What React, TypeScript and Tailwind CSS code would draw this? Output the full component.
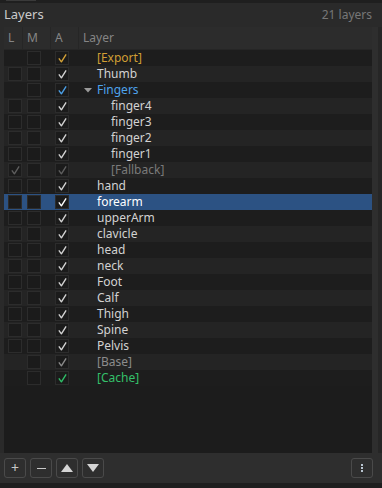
import React from 'react';

type Row = {
  name: string;
  depth: number;
  lBox: boolean;
  lCheck?: string;
  aCheck: string;
  text: string;
  arrow?: boolean;
  selected?: boolean;
};

const W = '#d2d2d2';

const rows: Row[] = [
  { name: '[Export]', depth: 0, lBox: false, aCheck: '#d4a237', text: '#d19f34' },
  { name: 'Thumb', depth: 0, lBox: true, aCheck: W, text: W },
  { name: 'Fingers', depth: 0, lBox: false, aCheck: '#4b9fe6', text: '#4ea3ec', arrow: true },
  { name: 'finger4', depth: 1, lBox: true, aCheck: W, text: W },
  { name: 'finger3', depth: 1, lBox: true, aCheck: W, text: W },
  { name: 'finger2', depth: 1, lBox: true, aCheck: W, text: W },
  { name: 'finger1', depth: 1, lBox: true, aCheck: W, text: W },
  { name: '[Fallback]', depth: 1, lBox: true, lCheck: '#5e5e5e', aCheck: '#5e5e5e', text: '#7a7a7a' },
  { name: 'hand', depth: 0, lBox: true, aCheck: W, text: W },
  { name: 'forearm', depth: 0, lBox: true, aCheck: '#ffffff', text: '#ffffff', selected: true },
  { name: 'upperArm', depth: 0, lBox: true, aCheck: W, text: W },
  { name: 'clavicle', depth: 0, lBox: true, aCheck: W, text: W },
  { name: 'head', depth: 0, lBox: true, aCheck: W, text: W },
  { name: 'neck', depth: 0, lBox: true, aCheck: W, text: W },
  { name: 'Foot', depth: 0, lBox: true, aCheck: W, text: W },
  { name: 'Calf', depth: 0, lBox: true, aCheck: W, text: W },
  { name: 'Thigh', depth: 0, lBox: true, aCheck: W, text: W },
  { name: 'Spine', depth: 0, lBox: true, aCheck: W, text: W },
  { name: 'Pelvis', depth: 0, lBox: true, aCheck: W, text: W },
  { name: '[Base]', depth: 0, lBox: false, aCheck: '#8a8a8a', text: '#8c8c8c' },
  { name: '[Cache]', depth: 0, lBox: false, aCheck: '#2fbf68', text: '#34c06a' },
];

function Check({ color }: { color: string }) {
  return (
    <svg width="11" height="11" viewBox="0 0 11 11">
      <path d="M2.2 5.8 L4.4 8.8 L8.8 1.8" fill="none" stroke={color} strokeWidth="1.4" strokeLinecap="round" strokeLinejoin="round" />
    </svg>
  );
}

function Box({ check }: { check?: string }) {
  return (
    <div className="w-[14px] h-[14px] bg-[#1b1b1b] border border-[#2c2c2c] flex items-center justify-center">
      {check && <Check color={check} />}
    </div>
  );
}

function LayerRow({ row, index }: { row: Row; index: number }) {
  const bg = row.selected ? 'bg-[#2c5283]' : index % 2 === 1 ? 'bg-[#242424]' : 'bg-[#1d1d1d]';
  return (
    <div className={`flex h-[16px] items-center ${bg}`}>
      <div className="w-[19px] pl-[4px] flex items-center">{row.lBox && <Box check={row.lCheck} />}</div>
      <div className="w-[28px] pl-[4px] flex items-center">
        <Box />
      </div>
      <div className="w-[28px] pl-[4px] flex items-center">
        <Box check={row.aCheck} />
      </div>
      <div className="flex-1 flex items-center h-full">
        <div className={row.depth === 1 ? 'w-[32px]' : 'w-[18px]'} />
        {row.arrow && (
          <svg width="8" height="5" viewBox="0 0 8 5" className="ml-[-13px] mr-[5px]">
            <path d="M0 0 H8 L4 4.5 Z" fill="#9a9a9a" />
          </svg>
        )}
        <span className="text-[12px] leading-none" style={{ color: row.text }}>
          {row.name}
        </span>
      </div>
    </div>
  );
}

function FooterButton({ children }: { children: React.ReactNode }) {
  return (
    <div className="w-[22px] h-[20px] rounded-[3px] border border-[#4a4a4a] flex items-center justify-center">
      {children}
    </div>
  );
}

export default function App() {
  return (
    <div
      className="w-[382px] h-[488px] bg-[#2a2a2a] flex flex-col overflow-hidden"
      style={{ fontFamily: '"Noto Sans", "Open Sans", sans-serif' }}
    >
      <div className="h-[3px] bg-[#1f1f1f] flex gap-[2px] pl-[6px]">
        <div className="w-[30px] h-[1px] bg-[#3a3a3a]" />
      </div>

      <div className="h-[24px] flex items-center justify-between pl-[4px] pr-[10px]">
        <span className="text-[13px] text-[#cbcbcb]">Layers</span>
        <span className="text-[12px] text-[#777777]">21 layers</span>
      </div>

      <div className="flex-1 flex">
        <div className="w-[4px]" />
        <div className="w-[368px] bg-[#1c1c1c] flex flex-col">
          <div className="h-[23px] bg-[#2c2c2c] border-b border-[#262626] flex items-center text-[12px] text-[#858585]">
            <div className="w-[19px] h-full pl-[4px] flex items-center border-r border-[#262626]">L</div>
            <div className="w-[28px] h-full pl-[4px] flex items-center border-r border-[#262626]">M</div>
            <div className="w-[28px] h-full pl-[4px] flex items-center border-r border-[#262626]">A</div>
            <div className="flex-1 pl-[4px]">Layer</div>
          </div>
          {rows.map((r, i) => (
            <LayerRow key={r.name} row={r} index={i} />
          ))}
        </div>
        <div className="w-[6px] bg-[#2e2e2e]" />
        <div className="w-[4px] bg-[#262626]" />
      </div>

      <div className="h-[30px] bg-[#2e2e2e] flex items-center pl-[4px] pr-[9px] gap-[4px]">
        <FooterButton>
          <span className="text-[14px] leading-none text-[#c8c8c8]">+</span>
        </FooterButton>
        <FooterButton>
          <div className="w-[9px] h-[1px] bg-[#c8c8c8]" />
        </FooterButton>
        <FooterButton>
          <svg width="12" height="8" viewBox="0 0 12 8">
            <path d="M6 0 L12 8 H0 Z" fill="#d4d4d4" />
          </svg>
        </FooterButton>
        <FooterButton>
          <svg width="12" height="8" viewBox="0 0 12 8">
            <path d="M0 0 H12 L6 8 Z" fill="#d4d4d4" />
          </svg>
        </FooterButton>
        <div className="flex-1" />
        <FooterButton>
          <div className="flex flex-col gap-[1px]">
            <div className="w-[2px] h-[2px] bg-[#b8c4d0]" />
            <div className="w-[2px] h-[2px] bg-[#b8c4d0]" />
            <div className="w-[2px] h-[2px] bg-[#b8c4d0]" />
          </div>
        </FooterButton>
      </div>

      <div className="h-[5px] bg-[#1f1f1f]" />
    </div>
  );
}
